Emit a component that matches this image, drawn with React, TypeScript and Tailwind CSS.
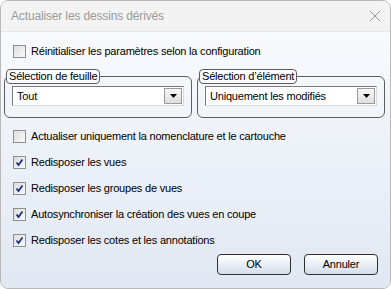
const Check = ({ checked }: { checked?: boolean }) => (
  <span className="flex h-[13px] w-[13px] shrink-0 items-center justify-center border border-[#8e8f8f] bg-gradient-to-br from-[#dcdcdc] to-[#fbfbfb]">
    {checked && (
      <svg width="9" height="9" viewBox="0 0 9 9">
        <path d="M1.5 4.5 L3.5 7 L7.5 1.5" fill="none" stroke="#1c2f8a" strokeWidth="1.8" />
      </svg>
    )}
  </span>
);

const Option = ({ label, checked }: { label: string; checked?: boolean }) => (
  <label className="flex h-[13px] items-center gap-[5px] pl-[12px] leading-[13px]">
    <Check checked={checked} />
    <span>{label}</span>
  </label>
);

const Combo = ({ value }: { value: string }) => (
  <div className="flex h-[20px] items-center border border-t-[#7a7a7a] border-l-[#7a7a7a] border-b-[#dadada] border-r-[#dadada] bg-white pl-[4px] pr-[1px]">
    <span className="flex-1">{value}</span>
    <span className="flex h-[16px] w-[18px] items-center justify-center border border-[#9a9a9a] bg-gradient-to-b from-[#f8f8f8] to-[#dedede]">
      <svg width="7" height="4" viewBox="0 0 7 4">
        <path d="M0 0 H7 L3.5 4 Z" fill="#000" />
      </svg>
    </span>
  </div>
);

const Group = ({ title, value }: { title: string; value: string }) => (
  <div className="relative flex-1 pt-[7px]">
    <div className="h-[42px] rounded-[6px] border border-[#5e5e5e] px-[7px] pt-[9px]">
      <Combo value={value} />
    </div>
    <span className="absolute left-[2px] top-0 h-[15px] rounded-[4px] border border-[#5e5e5e] bg-[#fbfcfe] px-[2px] leading-[13px]">
      {title}
    </span>
  </div>
);

const Btn = ({ label }: { label: string }) => (
  <button className="flex h-[21px] w-[74px] items-center justify-center rounded-[4px] border border-[#2f2f2f] bg-gradient-to-b from-[#ffffff] to-[#d3deed]">
    {label}
  </button>
);

export default function App() {
  return (
    <div className="h-[289px] w-[391px] bg-white font-['Liberation_Sans',sans-serif] text-[11px] tracking-[-0.2px] text-black">
      <div className="flex h-full flex-col overflow-hidden rounded-[8px] border border-[#b9b9b9]">
        {/* title bar */}
        <div className="flex h-[31px] shrink-0 items-center justify-between border-b border-[#e6e6e6] bg-[#f3f3f3] pl-[10px] pr-[9px]">
          <span className="text-[12px] tracking-[-0.15px] text-[#9a9a9a]">Actualiser les dessins dérivés</span>
          <svg width="12" height="12" viewBox="0 0 12 12">
            <path d="M1 1 L11 11 M11 1 L1 11" stroke="#9a9a9a" strokeWidth="1" />
          </svg>
        </div>

        <div className="flex flex-1 flex-col bg-gradient-to-b from-[#f8fafd] to-[#e1e8f3] pt-[13px]">
          <Option label="Réinitialiser les paramètres selon la configuration" />

          <div className="mt-[11px] flex gap-[5px] pl-[3px] pr-[5px]">
            <Group title="Sélection de feuille" value="Tout" />
            <Group title="Sélection d’élément" value="Uniquement les modifiés" />
          </div>

          <div className="mt-[12px] flex flex-col gap-[13px]">
            <Option label="Actualiser uniquement la nomenclature et le cartouche" />
            <Option label="Redisposer les vues" checked />
            <Option label="Redisposer les groupes de vues" checked />
            <Option label="Autosynchroniser la création des vues en coupe" checked />
            <Option label="Redisposer les cotes et les annotations" checked />
          </div>

          <div className="mt-[7px] flex justify-end gap-[13px] pr-[12px]">
            <Btn label="OK" />
            <Btn label="Annuler" />
          </div>
        </div>
      </div>
    </div>
  );
}
